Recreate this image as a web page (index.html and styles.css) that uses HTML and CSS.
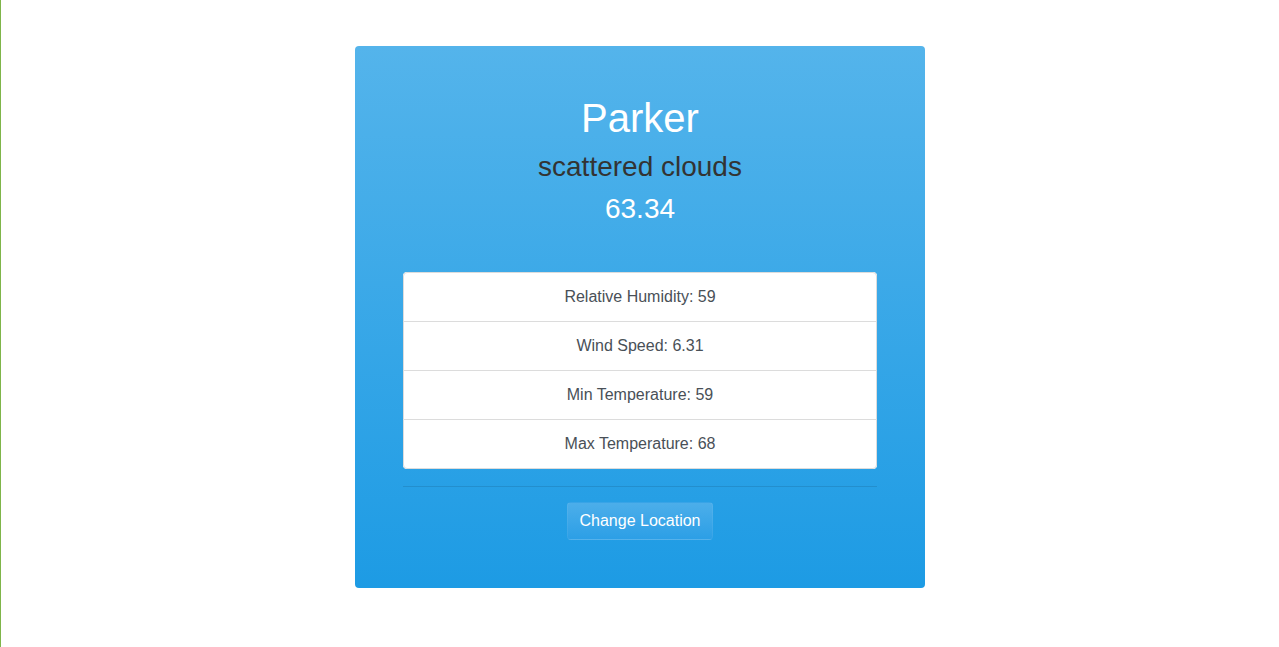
FILE: index.html
```html
<!DOCTYPE html>
<html lang="en">
<head>
<meta charset="utf-8">
<title>Weather</title>
<link rel="stylesheet" href="styles.css">
</head>
<body>
  <main class="page">
    <section class="card">
      <h1 class="city">Parker</h1>
      <h3 class="desc">scattered clouds</h3>
      <h3 class="temp">63.34</h3>
      <ul class="list">
        <li class="item">Relative Humidity: 59</li>
        <li class="item">Wind Speed: 6.31</li>
        <li class="item">Min Temperature: 59</li>
        <li class="item">Max Temperature: 68</li>
      </ul>
      <hr class="rule">
      <div class="actions">
        <button class="btn" type="button">Change Location</button>
      </div>
    </section>
  </main>
</body>
</html>
```

FILE: styles.css
```css
* { box-sizing: border-box; }

html, body { margin: 0; padding: 0; }

body {
  min-height: 100vh;
  border-left: 1px solid #7fb54a;
  background: #ffffff;
  font-family: "Liberation Sans", Arial, sans-serif;
  font-size: 16px;
  line-height: 1.5;
  color: #212529;
}

.page {
  padding-top: 46px;
}

.card {
  width: 570px;
  margin: 0 auto;
  padding: 48px;
  border-radius: 4px;
  background: linear-gradient(to bottom, #54b4eb 0%, #1d9be4 100%);
  text-align: center;
}

.city {
  margin: 0 0 8px;
  font-size: 40px;
  font-weight: 400;
  line-height: 1.2;
  color: #ffffff;
}

.desc {
  margin: 0 0 8px;
  font-size: 28px;
  font-weight: 400;
  line-height: 1.2;
  color: #333333;
}

.temp {
  margin: 0 0 8px;
  font-size: 28px;
  font-weight: 400;
  line-height: 1.2;
  color: #ffffff;
}

.list {
  list-style: none;
  margin: 47px 0 17px;
  padding: 0;
  background: #ffffff;
  border-radius: 4px;
}

.item {
  padding: 12px 20px;
  border: 1px solid #dcdcdc;
  margin-bottom: -1px;
  color: #495057;
  background: #ffffff;
}

.item:first-child {
  border-top-left-radius: 4px;
  border-top-right-radius: 4px;
}

.item:last-child {
  margin-bottom: 0;
  border-bottom-left-radius: 4px;
  border-bottom-right-radius: 4px;
}

.rule {
  margin: 0 0 15px;
  border: 0;
  border-top: 1px solid rgba(0, 0, 0, 0.1);
  height: 0;
}

.actions {
  display: flex;
  justify-content: center;
}

.btn {
  font-family: "Liberation Sans", Arial, sans-serif;
  font-size: 16px;
  line-height: 24px;
  padding: 6px 12px;
  color: #ffffff;
  background: linear-gradient(to bottom, #4caeea 0%, #2c9fe6 100%);
  border: 1px solid rgba(255, 255, 255, 0.06);
  border-radius: 4px;
  cursor: pointer;
}
```
